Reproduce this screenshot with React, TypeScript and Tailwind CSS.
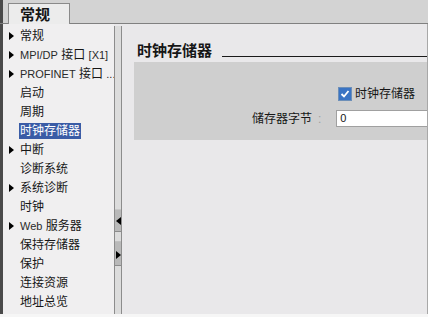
import React from 'react';

const items = [
  { label: '常规', arrow: true },
  { latin: 'MPI/DP', label: ' 接口 ', tail: '[X1]', arrow: true },
  { latin: 'PROFINET', label: ' 接口 ', tail: '...', arrow: true },
  { label: '启动' },
  { label: '周期' },
  { label: '时钟存储器', selected: true },
  { label: '中断', arrow: true },
  { label: '诊断系统' },
  { label: '系统诊断', arrow: true },
  { label: '时钟' },
  { latin: 'Web', label: ' 服务器', arrow: true },
  { label: '保持存储器' },
  { label: '保护' },
  { label: '连接资源' },
  { label: '地址总览' },
];

const font = { fontFamily: '"Liberation Sans", "Noto Sans CJK SC", sans-serif' };

function Arrow({ dir = 'right' }: { dir?: 'right' | 'left' }) {
  return (
    <svg width="5" height="8" viewBox="0 0 5 8" className="shrink-0">
      {dir === 'right' ? <path d="M0 0 L5 4 L0 8 Z" fill="#000" /> : <path d="M5 0 L0 4 L5 8 Z" fill="#000" />}
    </svg>
  );
}

export default function App() {
  return (
    <div className="w-[428px] h-[317px] flex flex-col bg-[#e9e8ea] overflow-hidden text-[#161616]" style={font}>
      {/* Tab bar */}
      <div className="h-[24px] flex bg-[#d3d3d3] border-b border-[#808080]">
        <div className="w-[3px] bg-[#4a4a4a]" />
        <div className="w-[5px]" />
        <div className="mt-[3px] w-[62px] -mb-px bg-[#ececec] border border-b-0 border-[#8a8a8a] flex items-center pl-[11px] text-[15px] font-bold leading-none">
          常规
        </div>
      </div>

      <div className="flex-1 flex min-h-0">
        <div className="w-[3px] bg-[#4a4a4a]" />

        {/* Navigation list */}
        <div className="w-[111px] bg-[#f0eff0] pt-[2px] flex flex-col overflow-hidden">
          {items.map((it) => (
            <div key={(it.latin ?? '') + it.label} className="h-[19px] flex items-center text-[12px] leading-none whitespace-nowrap">
              <div className="w-[16px] shrink-0 flex justify-end pr-[5px]">{it.arrow && <Arrow />}</div>
              <span className={it.selected ? 'bg-[#3a5ca6] text-white px-px py-[2px]' : 'px-px'}>
                {it.latin && <span className="text-[11px] text-[#2a2a2a]">{it.latin}</span>}
                {it.label}
                {it.tail && <span className="text-[11px] text-[#2a2a2a]">{it.tail}</span>}
              </span>
            </div>
          ))}
        </div>

        {/* Splitter */}
        <div className="w-[8px] bg-[#e9e8ea] pt-[2px] flex flex-col">
          <div className="flex-1 flex flex-col border-x border-[#8c8c8c] bg-[#dcdcdc]">
            <div className="h-[184px] border-b border-[#c8c8c8]" />
            <div className="h-[22px] bg-[#b9b9b9] flex items-center justify-end border-b border-[#8c8c8c]">
              <Arrow dir="left" />
            </div>
            <div className="h-[10px] border-b border-[#c0c0c0]" />
            <div className="h-[24px] bg-[#b9b9b9] flex items-end pb-[6px] justify-end border-b border-[#8c8c8c]">
              <Arrow />
            </div>
            <div className="flex-1" />
          </div>
        </div>

        {/* Content */}
        <div className="flex-1 flex flex-col border-r border-[#a8a8a8]">
          <div className="h-[38px] flex items-end pb-[4px] pl-[15px] gap-[10px]">
            <span className="text-[15px] font-bold leading-none">时钟存储器</span>
            <div className="flex-1 h-px bg-[#1a1a1a] mb-px" />
          </div>
          <div className="ml-[12px] h-[78px] bg-[#cfcfcf] flex flex-col">
            <div className="mt-[25px] ml-[204px] flex items-center gap-[3px]">
              <div className="w-[14px] h-[14px] bg-[#3a74c4] border border-[#6d8fb8] flex items-center justify-center">
                <svg width="10" height="10" viewBox="0 0 10 10">
                  <path d="M1.5 5 L4 7.5 L8.5 2" stroke="#fff" strokeWidth="1.8" fill="none" />
                </svg>
              </div>
              <span className="text-[12px] leading-none whitespace-nowrap">时钟存储器</span>
            </div>
            <div className="mt-[9px] flex items-center">
              <span className="ml-[118px] text-[12px] leading-none whitespace-nowrap">储存器字节</span>
              <span className="text-[12px] text-[#a0a0a0] ml-[6px] leading-none">:</span>
              <div className="ml-[15px] flex-1 h-[17px] bg-white border border-[#a0a0a0] border-r-0 flex items-center pl-[3px] text-[11px]">
                0
              </div>
            </div>
          </div>
          <div className="flex-1" />
        </div>
      </div>
      <div className="h-[3px] bg-[#f6f6f6]" />
    </div>
  );
}
